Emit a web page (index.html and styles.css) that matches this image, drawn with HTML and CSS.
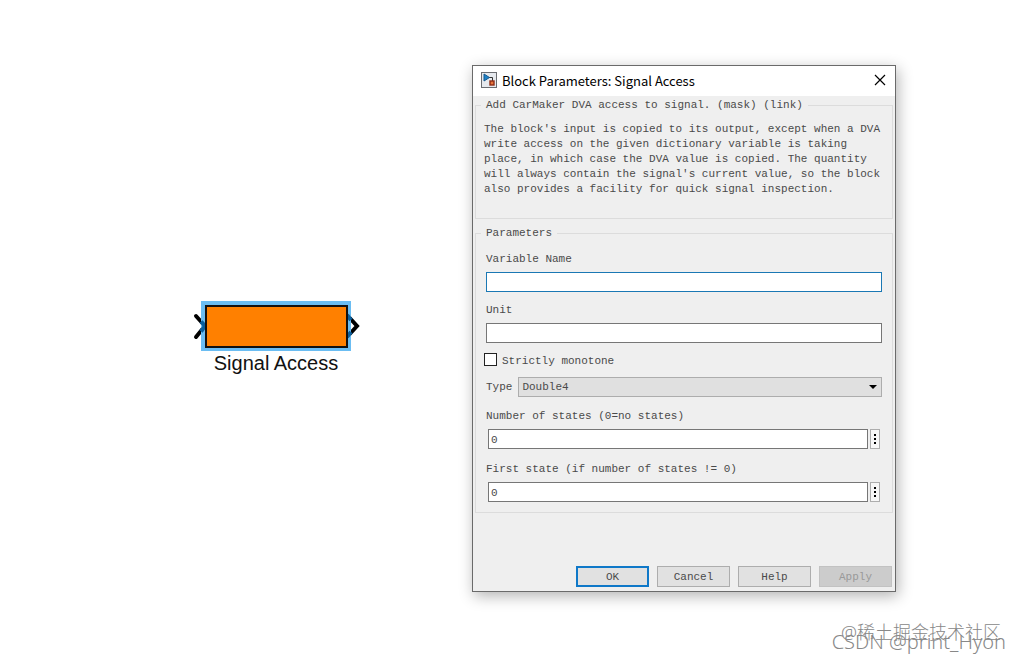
FILE: index.html
```html
<!DOCTYPE html>
<html lang="en">
<head>
    <meta charset="UTF-8">
    <meta name="viewport" content="width=device-width, initial-scale=1.0">
    <title>Block Parameters: Signal Access</title>
    <link rel="stylesheet" href="styles.css">
</head>
<body>
    <main class="workspace">
        <figure class="block">
            <svg class="block-shape" width="168" height="50" viewBox="0 0 168 50" aria-hidden="true">
                <path d="M4 15 L13 25 L4 36" fill="none" stroke="#000" stroke-width="4" stroke-linecap="round" stroke-linejoin="round"/>
                <path d="M155 14 L165 25 L155 36" fill="none" stroke="#000" stroke-width="4" stroke-linejoin="miter"/>
                <rect x="9" y="0" width="150" height="50" fill="#6bbdf2"/>
                <path d="M9 20.5 L13 25 L9 30.5" fill="none" stroke="#0b5f9c" stroke-width="4"/>
                <path d="M155 14 L159 19 M155 36 L159 31" fill="none" stroke="#0b5f9c" stroke-width="4"/>
                <rect x="14" y="5" width="141" height="41" fill="#ff8000" stroke="#111" stroke-width="2"/>
            </svg>
            <figcaption>Signal Access</figcaption>
        </figure>

        <form class="dialog" onsubmit="return false">
            <header class="titlebar">
                <svg width="16" height="16" viewBox="0 0 16 16" aria-hidden="true">
                    <rect x="0.5" y="0.5" width="15" height="15" fill="#e6e9ee" stroke="#6b6d72"/>
                    <path d="M8 5.5 H11.5 V9" fill="none" stroke="#333"/>
                    <path d="M3 2 L8.5 5.5 L3 9 Z" fill="#1e82c8" stroke="#14598e"/>
                    <rect x="9" y="9" width="4" height="4" fill="#e8743c" stroke="#8e2c14" stroke-width="1.4"/>
                </svg>
                <h1>Block Parameters: Signal Access</h1>
                <button type="button" class="close" aria-label="Close">
                    <svg width="12" height="12" viewBox="0 0 12 12" aria-hidden="true">
                        <path d="M1 1 L11 11 M11 1 L1 11" stroke="#000" stroke-width="1.2"/>
                    </svg>
                </button>
            </header>

            <div class="content">
                <fieldset class="description">
                    <legend>Add CarMaker DVA access to signal. (mask) (link)</legend>
                    <p>The block's input is copied to its output, except when a DVA write access on the given dictionary variable is taking place, in which case the DVA value is copied. The quantity will always contain the signal's current value, so the block also provides a facility for quick signal inspection.</p>
                </fieldset>

                <fieldset class="parameters">
                    <legend>Parameters</legend>
                    <div class="fields">
                        <div class="field">
                            <label for="variableName">Variable Name</label>
                            <input type="text" id="variableName" class="active">
                        </div>
                        <div class="field">
                            <label for="unit">Unit</label>
                            <input type="text" id="unit">
                        </div>
                        <div class="check">
                            <input type="checkbox" id="monotone">
                            <label for="monotone">Strictly monotone</label>
                        </div>
                        <div class="type">
                            <label for="type">Type</label>
                            <select id="type">
                                <option>Double4</option>
                            </select>
                        </div>
                        <div class="field state">
                            <label for="stateCount">Number of states (0=no states)</label>
                            <div class="with-menu">
                                <input type="text" id="stateCount" value="0">
                                <button type="button" class="more" aria-label="Number of states options">
                                    <svg width="2" height="10" viewBox="0 0 2 10" aria-hidden="true"><path d="M0 0h2v2H0z M0 4h2v2H0z M0 8h2v2H0z"/></svg>
                                </button>
                            </div>
                        </div>
                        <div class="field state">
                            <label for="firstState">First state (if number of states != 0)</label>
                            <div class="with-menu">
                                <input type="text" id="firstState" value="0">
                                <button type="button" class="more" aria-label="First state options">
                                    <svg width="2" height="10" viewBox="0 0 2 10" aria-hidden="true"><path d="M0 0h2v2H0z M0 4h2v2H0z M0 8h2v2H0z"/></svg>
                                </button>
                            </div>
                        </div>
                    </div>
                </fieldset>

                <div class="actions">
                    <button type="submit" class="primary">OK</button>
                    <button type="button">Cancel</button>
                    <button type="button">Help</button>
                    <button type="button" disabled>Apply</button>
                </div>
            </div>
        </form>
    </main>

    <div class="watermark community">@稀土掘金技术社区</div>
    <div class="watermark author">CSDN @print_Hyon</div>
</body>
</html>
```
FILE: styles.css
```css
* {
    box-sizing: border-box;
}
body {
    margin: 0;
    min-height: 100vh;
    position: relative;
    background-color: white;
    font-family: "Liberation Mono", monospace;
    font-size: 11px;
    line-height: 15px;
    color: #4a4a4a;
}
.workspace {
    display: grid;
    grid-template-columns: 472fr 424fr 124fr;
    align-items: start;
    padding-top: 65px;
}

/* Canvas block */
.block {
    margin: 0;
    padding: 236px 0 0 80px;
    display: flex;
    flex-direction: column;
    align-items: center;
}
.block-shape {
    display: block;
}
.block figcaption {
    font-family: "Liberation Sans", Arial, sans-serif;
    font-size: 20px;
    line-height: 24px;
    color: #111;
}

/* Dialog */
.dialog {
    border: 1px solid #6a6a6a;
    background-color: #efefef;
    box-shadow: 2px 4px 14px rgba(0, 0, 0, 0.3);
}
.titlebar {
    display: flex;
    align-items: center;
    gap: 5px;
    height: 30px;
    padding: 0 8px 2px;
    background-color: white;
}
.titlebar h1 {
    flex: 1;
    margin: 0;
    font-family: "Noto Sans CJK SC", sans-serif;
    font-size: 13px;
    font-weight: normal;
    color: black;
}
.close {
    display: flex;
    padding: 1px;
    border: none;
    background: none;
}
.content {
    padding: 2px 2px 4px;
}
fieldset {
    min-width: 0;
    margin: 0;
    border: 1px solid #dcdcdc;
}
legend {
    padding: 0 5px;
}
.description {
    padding: 9px 8px 21px;
}
.description legend {
    margin-left: -3px;
}
.description p {
    margin: 0;
}
.parameters {
    margin-top: 7px;
    padding: 10px 10px 9px;
}
.parameters legend {
    margin-left: -5px;
}
.fields {
    display: flex;
    flex-direction: column;
    gap: 10px;
}
.field {
    display: flex;
    flex-direction: column;
    gap: 5px;
}
.field label,
.check label {
    padding-top: 1px;
}
input[type="text"] {
    width: 100%;
    height: 20px;
    padding: 3px 2px 1px;
    border: 1px solid #767676;
    border-radius: 0;
    background-color: white;
    font: inherit;
    color: inherit;
}
input[type="text"].active {
    border-color: #1a78b4;
}
.check {
    display: flex;
    align-items: flex-start;
    gap: 5px;
    height: 14px;
    margin-left: -2px;
}
.check input {
    appearance: none;
    width: 13px;
    height: 13px;
    margin: 0;
    border: 1px solid #222;
    background-color: white;
}
.type {
    position: relative;
    display: flex;
    align-items: center;
    gap: 6px;
}
.type select {
    appearance: none;
    flex: 1;
    height: 20px;
    padding: 1px 3px 0;
    border: 1px solid #adadad;
    border-radius: 0;
    background-color: #e0e0e0;
    font: inherit;
    color: inherit;
}
/* drop-down arrow */
.type::after {
    content: "";
    position: absolute;
    right: 5px;
    top: 8px;
    border: 4px solid transparent;
    border-top-color: black;
    border-bottom: none;
    pointer-events: none;
}
.state {
    padding: 1px 0;
}
.with-menu {
    display: flex;
    gap: 2px;
    padding: 0 2px;
}
.with-menu input[type="text"] {
    flex: 1;
    min-width: 0;
}
.more {
    display: flex;
    align-items: center;
    justify-content: center;
    width: 10px;
    height: 20px;
    padding: 0;
    border: 1px solid #adadad;
    background-color: #f7f7f7;
}
.actions {
    display: flex;
    justify-content: flex-end;
    gap: 8px;
    margin-top: 53px;
    padding-right: 1px;
}
.actions button {
    width: 73px;
    height: 21px;
    padding: 2px 0 0;
    border: 1px solid #adadad;
    background-color: #e1e1e1;
    font: inherit;
    color: inherit;
}
.actions .primary {
    border: 2px solid #0f78c8;
}
.actions button:disabled {
    border-color: #c2c2c2;
    background-color: #cccccc;
    color: #999;
}

/* Watermarks overlap in the corner */
.watermark {
    position: absolute;
    white-space: nowrap;
    font-family: "Noto Sans", "Noto Sans CJK SC", sans-serif;
    font-weight: 300;
    color: #888;
}
.community {
    right: 19px;
    bottom: 18px;
    font-size: 18px;
    line-height: 24px;
}
.author {
    right: 14px;
    bottom: 8px;
    font-size: 20px;
    line-height: 24px;
}
```
